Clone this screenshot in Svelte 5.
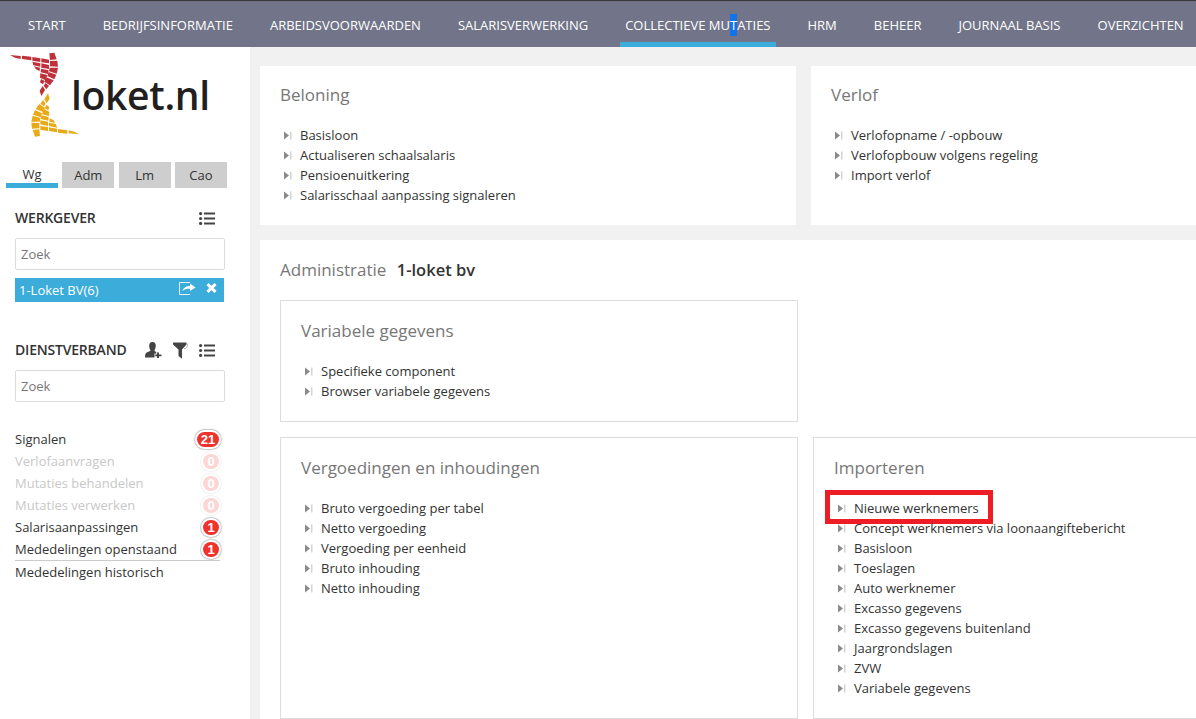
<script>
  const navItems = ['START', 'BEDRIJFSINFORMATIE', 'ARBEIDSVOORWAARDEN', 'SALARISVERWERKING', 'COLLECTIEVE', 'HRM', 'BEHEER', 'JOURNAAL BASIS', 'OVERZICHTEN'];

  // logo tiles, the yellow half is the red half turned over
  const tiles = [
    '30,165 62,168 62,177 45,173', '66,167 94,170 94,181 66,177', '97,171 121,175 121,186 97,182',
    '124,175 147,179 147,190 124,187', '148,160 163,158 170,178 150,180',
    '97,185 121,190 121,200 100,196', '124,190 147,195 147,207 124,203', '150,183 172,182 174,200 150,199',
    '102,199 120,203 119,213 108,208', '123,206 146,211 144,222 122,217', '149,203 174,203 170,221 147,214',
    '121,220 142,225 137,241 120,233', '146,216 169,224 163,238 142,228',
    '123,237 134,243 129,253 120,247', '139,232 161,241 150,256 133,245',
    '128,258 135,270 124,288 119,272', '136,249 147,257 139,268 131,257'
  ];

  const signals = [
    { label: 'Signalen', count: 21 },
    { label: 'Verlofaanvragen', count: 0 },
    { label: 'Mutaties behandelen', count: 0 },
    { label: 'Mutaties verwerken', count: 0 },
    { label: 'Salarisaanpassingen', count: 1 },
    { label: 'Mededelingen openstaand', count: 1 }
  ];

  const beloning = ['Basisloon', 'Actualiseren schaalsalaris', 'Pensioenuitkering', 'Salarisschaal aanpassing signaleren'];
  const verlof = ['Verlofopname / -opbouw', 'Verlofopbouw volgens regeling', 'Import verlof'];
  const variabele = ['Specifieke component', 'Browser variabele gegevens'];
  const vergoedingen = ['Bruto vergoeding per tabel', 'Netto vergoeding', 'Vergoeding per eenheid', 'Bruto inhouding', 'Netto inhouding'];
  const importeren = ['Nieuwe werknemers', 'Concept werknemers via loonaangiftebericht', 'Basisloon', 'Toeslagen', 'Auto werknemer', 'Excasso gegevens', 'Excasso gegevens buitenland', 'Jaargrondslagen', 'ZVW', 'Variabele gegevens'];
</script>

{#snippet listIcon()}
  <svg class="icon" width="16" height="13" viewBox="0 0 16 13">
    <circle cx="1.6" cy="1.6" r="1.6" /><circle cx="1.6" cy="6.5" r="1.6" /><circle cx="1.6" cy="11.4" r="1.6" />
    <rect x="5" y="0.5" width="11" height="2" /><rect x="5" y="5.5" width="11" height="2" /><rect x="5" y="10.5" width="11" height="2" />
  </svg>
{/snippet}

{#snippet links(items)}
  <ul class="links">
    {#each items as item}
      <li>
        <svg class="arrow" width="8" height="9" viewBox="0 0 8 9"><path d="M0 0.5 L5 4.5 L0 8.5 Z" fill="#8a8a8a" /><rect x="6" y="0.5" width="1.5" height="8" fill="#d4d4d4" /></svg>
        <span>{item}</span>
        {#if item === 'Nieuwe werknemers'}<i class="marker"></i>{/if}
      </li>
    {/each}
  </ul>
{/snippet}

<div class="page">
  <nav class="topnav">
    {#each navItems as item}
      <a class="navitem" class:active={item === 'COLLECTIEVE'}>
        {#if item === 'COLLECTIEVE'}COLLECTIEVE MU<span class="sel">T</span>ATIES{:else}{item}{/if}
      </a>
    {/each}
  </nav>

  <div class="content">
    <aside class="sidebar">
      <div class="logo">
        <svg width="80" height="90" viewBox="15 150 240 270">
          <g fill="#bf313a">
            {#each tiles as t}<polygon points={t} />{/each}
          </g>
          <g fill="#e9aa18" transform="translate(268 568) rotate(180)">
            {#each tiles as t}<polygon points={t} />{/each}
          </g>
        </svg>
        <span class="logotext">loket.nl</span>
      </div>

      <div class="tabs">
        <span class="tab current">Wg</span>
        <span class="tab">Adm</span>
        <span class="tab">Lm</span>
        <span class="tab">Cao</span>
      </div>

      <div class="sidehead first">
        <h3>WERKGEVER</h3>
        <span class="tools">{@render listIcon()}</span>
      </div>
      <div class="search">Zoek</div>
      <div class="picked">
        <span>1-Loket BV(6)</span>
        <svg class="share" width="17" height="13" viewBox="0 0 17 13">
          <path d="M11 12.5 H0.5 V0.5 H11" fill="none" stroke="#fff" stroke-width="1" opacity="0.85" />
          <path d="M3.5 9 C4.5 5.5 7.5 4 11 4 V1.5 L16.5 5.5 L11 9 V6.8 C8 6.6 5.5 7 3.5 9 Z" fill="#fff" />
        </svg>
        <svg class="close" width="11" height="10" viewBox="0 0 11 10">
          <path d="M1.5 1.2 L9.5 8.8 M9.5 1.2 L1.5 8.8" stroke="#fff" stroke-width="3" />
        </svg>
      </div>

      <div class="sidehead second">
        <h3>DIENSTVERBAND</h3>
        <span class="tools">
          <svg class="icon" width="17" height="16" viewBox="0 0 17 16">
            <path d="M7.5 0 C10 0 11 2 10.8 4.3 C10.6 6.3 9.8 7.6 9.5 8.3 C9.4 9 10 9.6 11.3 10 V11.5 H9.5 V15.5 H0 C0 12.5 0.5 11 2.2 10.3 C3.8 9.6 5.4 9.3 5.4 8.3 C5 7.5 4.3 6.2 4.2 4.3 C4 2 5 0 7.5 0 Z" />
            <path d="M12 10.5 H14 V12.5 H16.5 V14.3 H14 V16 H12 V14.3 H10.2 V12.5 H12 Z" />
          </svg>
          <svg class="icon funnel" width="15" height="17" viewBox="0 0 15 17">
            <path d="M0 0.5 H13.5 V2.5 L9 7.5 V16.8 L5.5 14 V7.5 L0 2.5 Z" />
            <path d="M13.5 1 C15.5 3 14.5 6 11 7" fill="none" stroke="#aaa" stroke-width="1" />
          </svg>
          {@render listIcon()}
        </span>
      </div>
      <div class="search">Zoek</div>

      <ul class="signals">
        {#each signals as s}
          <li class:muted={s.count === 0}>
            <span>{s.label}</span>
            <b class="badge" class:wide={s.count > 9}>{s.count}</b>
          </li>
        {/each}
        <li class="history"><span>Mededelingen historisch</span></li>
      </ul>
    </aside>

    <main class="main">
      <div class="toprow">
        <section class="card">
          <h2>Beloning</h2>
          {@render links(beloning)}
        </section>
        <section class="card">
          <h2>Verlof</h2>
          {@render links(verlof)}
        </section>
      </div>

      <section class="panel">
        <div class="admin">Administratie <strong>1-loket bv</strong></div>
        <div class="boxes">
          <div class="box short">
            <h2>Variabele gegevens</h2>
            {@render links(variabele)}
          </div>
          <div class="spacer"></div>
          <div class="box tall">
            <h2>Vergoedingen en inhoudingen</h2>
            {@render links(vergoedingen)}
          </div>
          <div class="box tall">
            <h2>Importeren</h2>
            {@render links(importeren)}
          </div>
        </div>
      </section>
    </main>
  </div>
</div>

<style>
  :global(body) {
    margin: 0;
    overflow: hidden;
  }

  .page {
    width: 1196px;
    height: 719px;
    overflow: hidden;
    font-family: "Open Sans", sans-serif;
    font-size: 13px;
    color: #333;
    background: #f1f1f1;
  }

  .topnav {
    display: flex;
    gap: 26px;
    height: 47px;
    padding-left: 22.5px;
    box-sizing: border-box;
    background: #727589;
    box-shadow: inset 0 2px 1px -1px #333;
    white-space: nowrap;
  }

  .navitem {
    padding: 0 5.5px;
    height: 47px;
    box-sizing: border-box;
    line-height: 51px;
    color: #fff;
    font-size: 13px;
  }

  .navitem.active {
    border-bottom: 5px solid #3cacdb;
  }

  .sel {
    background: #0f73ee;
    padding: 2px 0;
  }

  .content {
    display: flex;
    height: 672px;
  }

  .sidebar {
    width: 250px;
    flex: none;
    background: #fff;
    box-sizing: border-box;
    padding: 0 25px 0 15px;
  }

  .logo {
    display: flex;
    align-items: flex-start;
    height: 112px;
    margin-left: -10px;
    margin-top: 3px;
    margin-right: -20px;
  }

  .logotext {
    margin: 12px 0 0 -14px;
    font-size: 39px;
    line-height: 66px;
    font-weight: 600;
    color: #231f20;
    letter-spacing: -0.3px;
  }

  .tabs {
    display: flex;
    gap: 4.3px;
    margin-left: -9px;
    margin-right: -2px;
  }

  .tab {
    width: 52px;
    height: 26px;
    flex: none;
    box-sizing: border-box;
    background: #cecece;
    text-align: center;
    line-height: 26px;
  }

  .tab.current {
    background: #fff;
    border-bottom: 5px solid #3cacdb;
    line-height: 24px;
  }

  .sidehead {
    display: flex;
    justify-content: space-between;
    align-items: center;
    height: 20px;
    padding-right: 10px;
  }

  .sidehead.first {
    margin-top: 20px;
    margin-bottom: 10px;
  }

  .sidehead.second {
    margin-top: 38px;
    margin-bottom: 10px;
  }

  h3 {
    margin: -2px 0 0;
    font-size: 14px;
    font-weight: 600;
    color: #333;
    letter-spacing: -0.2px;
  }

  .tools {
    display: flex;
    align-items: center;
    gap: 11px;
  }

  .icon {
    fill: #444;
    display: block;
  }

  .search {
    height: 32px;
    box-sizing: border-box;
    border: 1px solid #ddd;
    border-radius: 2px;
    padding-left: 5px;
    line-height: 30px;
    color: #777;
  }

  .picked {
    display: flex;
    align-items: center;
    height: 24px;
    width: 209px;
    margin-top: 8px;
    padding: 0 7px 0 4px;
    box-sizing: border-box;
    background: #3cacdb;
    color: #fff;
  }

  .picked span {
    flex: 1;
  }

  .share {
    margin-right: 10px;
    margin-top: -3px;
  }

  .close {
    margin-top: -4px;
  }

  .signals {
    list-style: none;
    margin: 26px 0 0;
    padding: 0;
    width: 205px;
  }

  .signals li {
    display: flex;
    justify-content: space-between;
    align-items: center;
    height: 22px;
  }

  .signals li.muted {
    color: #c8c8c8;
  }

  .signals li.history {
    border-top: 1px solid #ccc;
  }

  .badge {
    box-sizing: border-box;
    min-width: 16px;
    height: 15px;
    padding: 0 3px;
    margin-right: 1px;
    border-radius: 8px;
    background: #f0322d;
    color: #fff;
    font-family: "Liberation Sans", sans-serif;
    font-size: 13px;
    font-weight: 700;
    line-height: 15px;
    text-align: center;
    box-shadow: 0 0 0 2px #fff, 0 0 1px 3px #c4c4c4;
  }

  .badge.wide {
    width: 22px;
  }

  .muted .badge {
    background: #fcd6d5;
    box-shadow: 0 0 0 2px #fff, 0 0 1px 3px #f2f2f2;
  }

  .main {
    flex: 1;
    min-width: 0;
    padding: 19px 0 0 10px;
    overflow: hidden;
  }

  .toprow {
    display: flex;
    gap: 15px;
    width: 1100px;
  }

  .card {
    width: 536px;
    height: 159px;
    flex: none;
    box-sizing: border-box;
    background: #fff;
    padding: 18px 20px;
  }

  h2 {
    margin: 0;
    font-size: 17px;
    line-height: 22px;
    font-weight: 400;
    color: #777;
  }

  .links {
    list-style: none;
    margin: 19px 0 0;
    padding: 0;
  }

  .links li {
    position: relative;
    display: flex;
    align-items: center;
    height: 20px;
    white-space: nowrap;
  }

  .arrow {
    margin: 0 8px 0 4px;
    flex: none;
  }

  .marker {
    position: absolute;
    left: -9px;
    top: -8px;
    width: 168px;
    height: 34px;
    box-sizing: border-box;
    border: 5px solid #ee1c25;
  }

  .panel {
    width: 1100px;
    margin-top: 15px;
    height: 500px;
    box-sizing: border-box;
    background: #fff;
    padding: 19px 20px;
  }

  .admin {
    font-size: 17px;
    line-height: 22px;
    color: #777;
  }

  .admin strong {
    margin-left: 6px;
    font-size: 16.5px;
    font-weight: 600;
    color: #333;
  }

  .boxes {
    display: grid;
    grid-template-columns: 518px 518px;
    grid-template-rows: 122px 282px;
    gap: 15px;
    margin-top: 19px;
  }

  .box {
    box-sizing: border-box;
    border: 1px solid #ddd;
    padding: 19px 20px;
  }
</style>
